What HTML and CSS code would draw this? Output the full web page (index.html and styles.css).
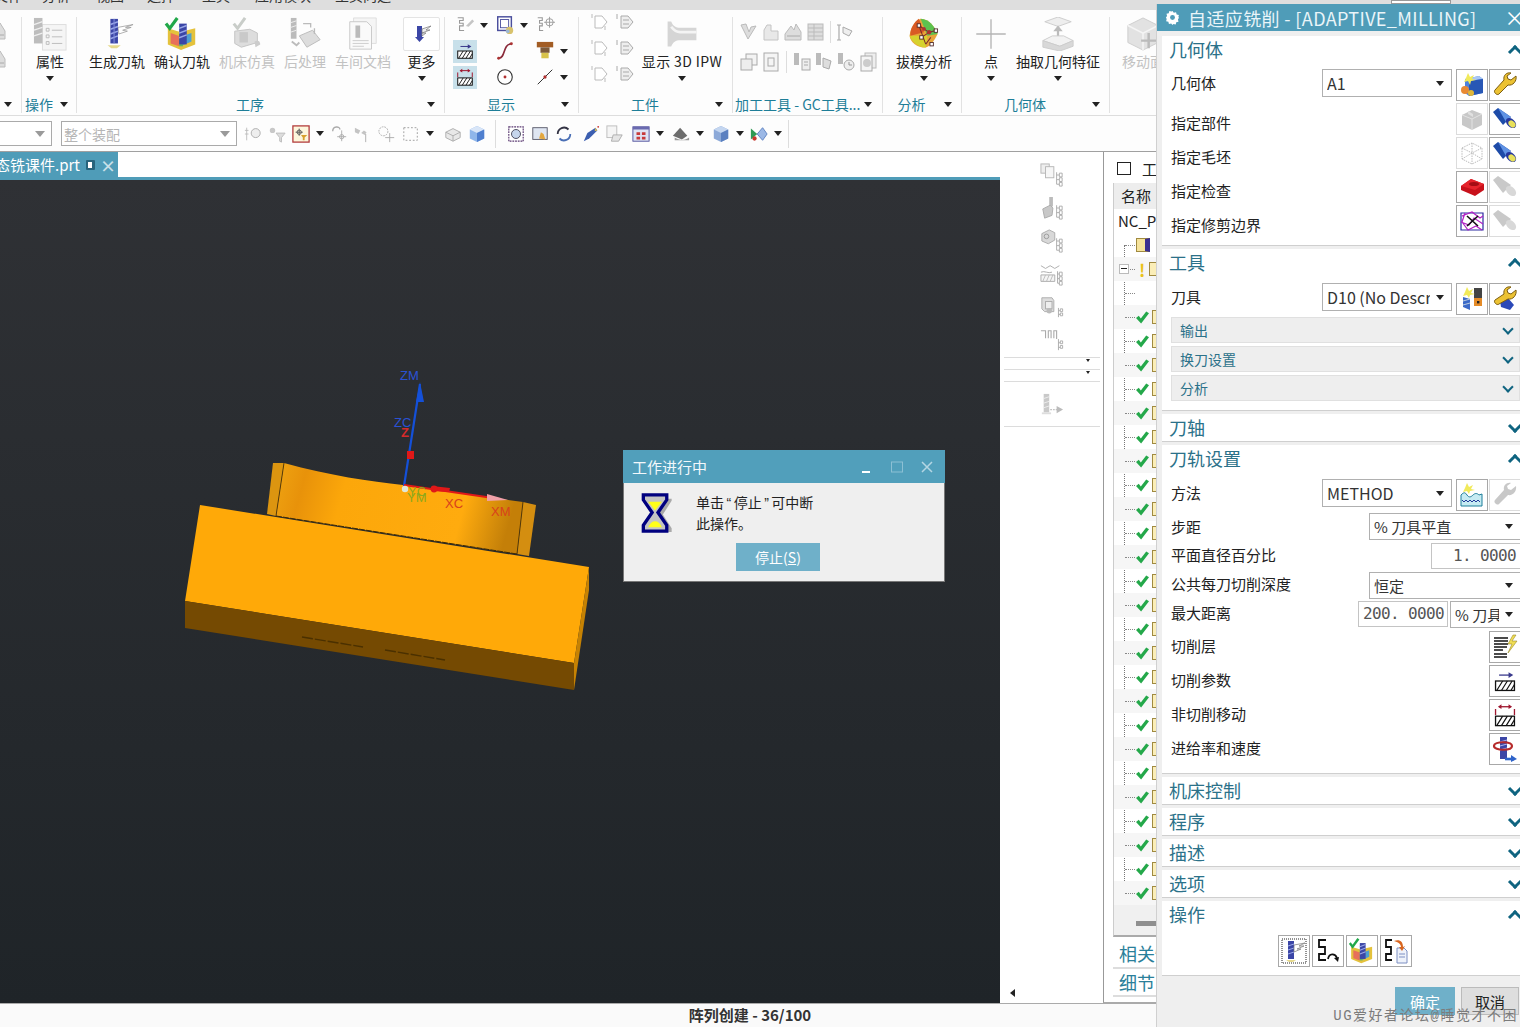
FILE: index.html
```html
<!DOCTYPE html>
<html lang="zh">
<head>
<meta charset="utf-8">
<title>NX CAM</title>
<link rel="stylesheet" href="styles.css">
</head>
<body>
<svg class="defs" aria-hidden="true">
<symbol id="gen" viewBox="0 0 36 36"><path d="M19 11l16-3-8 3 6 0-9 3 5 1-9 3z" fill="#fff" stroke="#999" stroke-width=".8"/><rect x="11" y="2" width="8" height="26" fill="#3b46a6"/><path d="M11 8l8-3M11 13l8-3M11 18l8-3M11 23l8-3" stroke="#9aa8e8" stroke-width="1.6"/><rect x="14" y="2" width="2" height="26" fill="#7f8bd8" opacity=".6"/><path d="M8 30h14l-4 3h-6z" fill="#e6d98c"/></symbol>
<symbol id="ver" viewBox="0 0 36 36"><path d="M3 12l13 4 16-4v17l-15 6L3 29z" fill="#e4c23c"/><path d="M6 17l9 3v11l-9-3z" fill="#e7705a"/><path d="M15 20l4 0v11l-4 0z" fill="#5db26b"/><path d="M19 20l9-3v9l-9 4z" fill="#4f9fd0"/><rect x="15" y="7" width="8" height="22" fill="#3b46a6"/><path d="M15 12l8-3M15 17l8-3M15 22l8-3" stroke="#9aa8e8" stroke-width="1.5"/><path d="M1 7l4 5 8-11" fill="none" stroke="#21a84a" stroke-width="3.4"/></symbol>
<symbol id="sim" viewBox="0 0 36 36"><path d="M5 15l16-2 8 4v10l-17 5-7-4z" fill="#ddd" stroke="#c4c4c4"/><path d="M10 16h9v11h-9z" fill="#c9c9c9"/><path d="M4 7l4 5 8-11" fill="none" stroke="#c9cdc9" stroke-width="3.2"/><path d="M26 26c4-2 6 0 6 3l-5 3z" fill="#ccc"/></symbol>
<symbol id="post" viewBox="0 0 36 36"><rect x="3" y="1" width="6" height="22" fill="#bbb"/><path d="M3 6l6-2M3 11l6-2M3 16l6-2" stroke="#eee"/><path d="M12 20l14-6 8 10-14 8z" fill="#ddd" stroke="#bbb"/><path d="M16 7h8v4M28 12v6" fill="none" stroke="#bbb" stroke-width="1.4"/><path d="M4 26l5 4 3-3" fill="none" stroke="#bbb" stroke-width="2"/></symbol>
<symbol id="doc" viewBox="0 0 36 36"><path d="M8 1h24v27H8z" fill="#f5f5f5" stroke="#ddd"/><path d="M4 5h18l5 5v24H4z" fill="#fafafa" stroke="#c8c8c8"/><rect x="10" y="9" width="5" height="13" fill="#bbb"/><path d="M7 25h17M7 28h17M7 31h12" stroke="#ccc"/></symbol>
<symbol id="attr" viewBox="0 0 36 36"><rect x="10" y="8" width="25" height="27" fill="#f5f5f5" stroke="#ddd"/><path d="M20 14h11M20 21h11M20 28h11" stroke="#bbb"/><path d="M14 12h3v3h-3zM14 19h3v3h-3zM14 26h3v3h-3z" fill="none" stroke="#bbb"/><rect x="1" y="1" width="9" height="27" fill="#bdbdbd"/><path d="M1 8l9-3M1 14l9-3M1 20l9-3" stroke="#eee" stroke-width="1.4"/></symbol>
<symbol id="more" viewBox="0 0 20 20"><rect x="5" y="2" width="5" height="13" fill="#3b46a6"/><path d="M10 5l9-3-5 4 4 0-8 3 4 0-4 3z" fill="#eee" stroke="#777" stroke-width=".7"/><path d="M3 13l4.500 5 4.500-5z" fill="#3b46a6"/></symbol>
<symbol id="s1" viewBox="0 0 22 22"><path d="M3 3h6v3H5v3h4v3H5v5h5" fill="none" stroke="#999" stroke-width="1.2"/><path d="M12 12l7-7 2 2-6 6z" fill="#c5c5c5"/></symbol>
<symbol id="s2" viewBox="0 0 22 22"><rect x="3" y="2" width="15" height="15" fill="#fff" stroke="#4b4f9d" stroke-width="1.6"/><rect x="6" y="5" width="9" height="9" fill="none" stroke="#4b4f9d"/><circle cx="16" cy="17" r="4" fill="#d8c26c"/><circle cx="14" cy="18" r="2" fill="#9bb8d8"/></symbol>
<symbol id="s3" viewBox="0 0 22 22"><path d="M3 3h5v3H5v3h3v3H5v5h4" fill="none" stroke="#999" stroke-width="1.2"/><circle cx="16" cy="8" r="4" fill="none" stroke="#999"/><path d="M16 2v12M10 8h12" stroke="#999"/></symbol>
<symbol id="cutp" viewBox="0 0 22 22"><path d="M6 6h10" stroke="#3a3a8c" stroke-width="1.1"/><path d="M14 3.500l4 2.500-4 2.500z" fill="#3a3a8c"/><rect x="3" y="11" width="16" height="8" fill="#fff" stroke="#111" stroke-width="1.1"/><path d="M4 19l5-8M8 19l5-8M12 19l5-8M16 19l3-5" stroke="#111" stroke-width="1"/></symbol>
<symbol id="noncut" viewBox="0 0 22 22"><path d="M6 4h10" stroke="#a01830" stroke-width="1.1"/><path d="M8 2l-3 2 3 2zM14 2l3 2-3 2z" fill="#a01830"/><path d="M3 6v5M19 6v5" stroke="#a01830" stroke-width="1.1"/><rect x="3" y="12" width="16" height="8" fill="#fff" stroke="#111" stroke-width="1.1"/><path d="M4 20l5-8M8 20l5-8M12 20l5-8M16 20l3-5" stroke="#111" stroke-width="1"/></symbol>
<symbol id="curve" viewBox="0 0 22 22"><path d="M4 19c8 0 4-15 14-16" fill="none" stroke="#8a2a3a" stroke-width="1.8"/><circle cx="4" cy="19" r="1.6" fill="#a33"/><circle cx="18" cy="3" r="1.6" fill="#a33"/></symbol>
<symbol id="tool" viewBox="0 0 22 22"><rect x="2" y="1" width="18" height="6" fill="#a25c24"/><rect x="6" y="7" width="10" height="6" fill="#7d5a3a"/><rect x="7" y="13" width="8" height="6" fill="#d8c24a"/></symbol>
<symbol id="circ" viewBox="0 0 22 22"><circle cx="11" cy="11" r="8" fill="#fff" stroke="#333" stroke-width="1.2"/><circle cx="11" cy="11" r="1.6" fill="#b03030"/></symbol>
<symbol id="line" viewBox="0 0 22 22"><path d="M3 19L19 3" stroke="#333" stroke-width="1.1"/><circle cx="11" cy="11" r="1.8" fill="#b03030"/></symbol>
<symbol id="tri" viewBox="0 0 20 20"><path d="M5 4h7l5 6-5 6H5z" fill="#fff" stroke="#bbb"/><path d="M2 2v4M15 14v4" stroke="#bbb"/></symbol>
<symbol id="trib" viewBox="0 0 20 20"><path d="M6 4h7l5 6-5 6H6z" fill="#eee" stroke="#aaa"/><path d="M2 2v5M8 8h6M8 12h6" stroke="#aaa"/></symbol>
<symbol id="ipw" viewBox="0 0 40 36"><path d="M4 4h4c2 5 5 7 10 7h18v14H18c-5 0-8 2-10 7H4z" fill="#d5d5d5"/><path d="M8 10c3 4 6 6 10 6h18" stroke="#f4f4f4" stroke-width="3" fill="none"/></symbol>
<symbol id="gc1" viewBox="0 0 20 20"><path d="M2 3l7 14 8-13-5 1-2 5-3-8z" fill="#ddd" stroke="#bbb"/></symbol>
<symbol id="gc2" viewBox="0 0 20 20"><path d="M3 8l3-5h4v6h7v9H3z" fill="#e8e8e8" stroke="#c4c4c4"/></symbol>
<symbol id="gc3" viewBox="0 0 20 20"><path d="M2 12l6-8 3 4 2-6 5 8v8H2z" fill="#ddd" stroke="#bbb"/><path d="M4 14h13" stroke="#aaa"/></symbol>
<symbol id="gc4" viewBox="0 0 20 20"><rect x="3" y="2" width="15" height="16" fill="#ddd" stroke="#bbb"/><path d="M3 6h15M3 10h15M3 14h15M9 2v16" stroke="#bbb"/></symbol>
<symbol id="gc5" viewBox="0 0 20 20"><path d="M3 3v15M1 3h4M1 18h4" stroke="#aaa" stroke-width="1.2"/><path d="M7 5l9 4-3 5-6-3z" fill="#eee" stroke="#aaa"/></symbol>
<symbol id="gc6" viewBox="0 0 20 20"><rect x="7" y="2" width="11" height="11" fill="#f3f3f3" stroke="#aaa"/><rect x="2" y="7" width="11" height="11" fill="#eee" stroke="#aaa"/></symbol>
<symbol id="gc7" viewBox="0 0 20 20"><rect x="3" y="1" width="14" height="18" fill="#f5f5f5" stroke="#aaa"/><rect x="7" y="6" width="6" height="8" fill="none" stroke="#aaa"/></symbol>
<symbol id="gc8" viewBox="0 0 20 20"><rect x="2" y="1" width="5" height="12" fill="#bbb"/><rect x="10" y="7" width="8" height="11" fill="#eee" stroke="#aaa"/><path d="M12 10h4M12 13h4" stroke="#aaa"/></symbol>
<symbol id="gc9" viewBox="0 0 20 20"><rect x="2" y="1" width="5" height="12" fill="#bbb"/><path d="M9 6l8 3-2 8-6-2z" fill="#ddd" stroke="#aaa"/></symbol>
<symbol id="gc10" viewBox="0 0 20 20"><rect x="2" y="1" width="5" height="11" fill="#bbb"/><circle cx="13" cy="13" r="5" fill="#eee" stroke="#aaa"/><path d="M13 10v3h3" stroke="#999" fill="none"/></symbol>
<symbol id="gc11" viewBox="0 0 20 20"><rect x="7" y="1" width="11" height="15" fill="#eee" stroke="#bbb"/><rect x="3" y="4" width="11" height="15" fill="#f5f5f5" stroke="#aaa"/><circle cx="9" cy="11" r="4" fill="#ccc"/></symbol>
<symbol id="st1" viewBox="0 0 26 26"><rect x="1" y="1" width="9" height="10" fill="#eee" stroke="#b5b5b5"/><rect x="6" y="4" width="9" height="12" fill="#f6f6f6" stroke="#b5b5b5"/><path d="M18 10v13M18 13h3M18 18h3M18 23h3" fill="none" stroke="#aaa"/><path d="M21 11h3v4h-3zM21 16h3v4h-3zM21 21h3v4h-3z" fill="#fff" stroke="#aaa"/></symbol>
<symbol id="st2" viewBox="0 0 26 26"><path d="M10 1h4v10l-4 2z" fill="#bbb"/><path d="M3 14l8-4 3 3-1 8-8 3z" fill="#c8c8c8" stroke="#aaa"/><path d="M18 10v13M18 13h3M18 18h3M18 23h3" fill="none" stroke="#aaa"/><path d="M21 11h3v4h-3zM21 16h3v4h-3zM21 21h3v4h-3z" fill="#fff" stroke="#aaa"/></symbol>
<symbol id="st3" viewBox="0 0 26 26"><path d="M2 5l8-4 6 3v8l-7 4-7-3z" fill="#d8d8d8" stroke="#aaa"/><circle cx="7" cy="8" r="2.500" fill="none" stroke="#999"/><path d="M18 10v13M18 13h3M18 18h3M18 23h3" fill="none" stroke="#aaa"/><path d="M21 11h3v4h-3zM21 16h3v4h-3zM21 21h3v4h-3z" fill="#fff" stroke="#aaa"/></symbol>
<symbol id="st4" viewBox="0 0 26 26"><path d="M1 4l5 3 5-3 5 3 5-3" fill="none" stroke="#aaa"/><path d="M1 11c4-2 8 2 12 0M1 14h15v7H1z" fill="#f5f5f5" stroke="#aaa"/><path d="M3 21l3-7M7 21l3-7M11 21l3-7" stroke="#bbb"/><path d="M19 10v13M19 13h2M19 18h2M19 23h2" fill="none" stroke="#aaa"/><path d="M21 11h3v4h-3zM21 16h3v4h-3zM21 21h3v4h-3z" fill="#fff" stroke="#aaa"/></symbol>
<symbol id="st5" viewBox="0 0 26 26"><path d="M2 3h11l2 3v12H5L2 15z" fill="#ddd" stroke="#aaa"/><rect x="6" y="7" width="7" height="8" fill="#eee" stroke="#aaa"/><circle cx="10" cy="17" r="3" fill="#bbb"/><path d="M20 14v10M20 17h2M20 21h2" fill="none" stroke="#aaa"/><path d="M22 15h2.500v3H22zM22 19.500h2.500v3H22z" fill="#fff" stroke="#aaa"/></symbol>
<symbol id="st6" viewBox="0 0 26 26"><path d="M1 3h5v8M9 11V3h3v8M15 11V3h3v9" fill="none" stroke="#aaa" stroke-width="1.2"/><path d="M20 12v12M20 16h2M20 21h2" fill="none" stroke="#aaa"/><path d="M22 14h2.500v3H22zM22 19h2.500v3H22z" fill="#fff" stroke="#aaa"/></symbol>
<symbol id="st7" viewBox="0 0 26 26"><rect x="4" y="1" width="6" height="20" fill="#c9c9c9"/><path d="M4 6l6-2M4 11l6-2M4 16l6-2" stroke="#eee"/><path d="M2 21h10v2H2z" fill="#ddd"/><path d="M11 18h8" stroke="#c4c4c4" stroke-width="1.5" stroke-dasharray="2 1"/><path d="M18 14l7 4-7 4z" fill="#bbb"/></symbol>
<symbol id="draft" viewBox="0 0 40 40"><path d="M16 2c10 0 17 10 20 18-4 8-8 14-14 16C12 36 4 30 3 22 4 13 10 4 16 2z" fill="#e8a53a"/><path d="M16 2c10 0 17 10 20 18L24 22z" fill="#5cc24f"/><path d="M3 22c3 8 10 13 19 14l2-14z" fill="#d6d22e"/><path d="M4 22c-1-8 5-17 10-20l6 16z" fill="#d95a24"/><path d="M14 10l8 22M14 10l12 8M26 18l-9 6M26 18l8-2M22 32l6-8" stroke="#7a2c2c" stroke-width="1.2"/><g fill="#fff" stroke="#4a2020"><rect x="12" y="8" width="4" height="4"/><rect x="32" y="14" width="4" height="4"/><rect x="15" y="22" width="4" height="4"/><rect x="27" y="30" width="4" height="4"/></g><circle cx="26" cy="18" r="2.600" fill="#a33"/><circle cx="20" cy="14" r="2.200" fill="#a33"/></symbol>
<symbol id="pt" viewBox="0 0 30 30"><path d="M15 2v26M2 15h26" stroke="#b5b5b5" stroke-width="1.2"/></symbol>
<symbol id="ext" viewBox="0 0 36 36"><path d="M18 0l14 5-14 5-14-5z" fill="#eee" stroke="#ccc"/><path d="M18 26V12" stroke="#bbb" stroke-width="2.400"/><path d="M13 15l5-6 5 6z" fill="#bbb"/><path d="M2 25l10-5h12l10 5-14 6z" fill="#f2f2f2" stroke="#ccc"/><path d="M2 25v7l18 4 14-5v-6l-14 6z" fill="#d8d8d8" stroke="#ccc"/></symbol>
<symbol id="mv" viewBox="0 0 36 36"><path d="M18 1l16 8v18l-16 8-16-8V9z" fill="#e2e2e2" stroke="#ccc"/><path d="M2 9l16 8 16-8M18 17v18" stroke="#f5f5f5" stroke-width="1.6" fill="none"/><path d="M24 17v16M16 25h16" stroke="#bbb" stroke-width="2.600"/></symbol>
<symbol id="cube" viewBox="0 0 20 20"><path d="M10 1l8 4v10l-8 4-8-4V5z" fill="#8fb6ea"/><path d="M2 5l8 4 8-4-8-4z" fill="#d9e6f8"/><path d="M10 9v10l8-4V5z" fill="#4f7fcf"/></symbol>
<symbol id="t1" viewBox="0 0 20 20"><path d="M3 3v14M1 6h4M1 10h4" stroke="#bbb"/><circle cx="13" cy="9" r="5" fill="#eee" stroke="#aaa"/></symbol>
<symbol id="t2" viewBox="0 0 20 20"><circle cx="5" cy="6" r="3" fill="#c8c8c8"/><path d="M9 9h10l-4 5v5l-2-1v-4z" fill="#ddd" stroke="#bbb"/></symbol>
<symbol id="t3" viewBox="0 0 20 20"><rect x="1" y="1" width="18" height="18" fill="#fdf6dc" stroke="#b03838" stroke-width="1.4"/><path d="M8 4v8M4 8h8" stroke="#555"/><circle cx="8" cy="8" r="2.400" fill="none" stroke="#555"/><path d="M10 11h7l-3 3v3h-2v-3z" fill="#d8a02c"/></symbol>
<symbol id="t4" viewBox="0 0 20 20"><path d="M3 7c0-6 8-6 8-2" fill="none" stroke="#aaa" stroke-width="1.5"/><path d="M13 6v12M8 13h10" stroke="#aaa"/><circle cx="13" cy="13" r="2.400" fill="none" stroke="#aaa"/></symbol>
<symbol id="t5" viewBox="0 0 20 20"><path d="M1 3l6 3-2 4-4-2zM8 9l3-3 3 2-2 3z" fill="#c4c4c4"/><path d="M13 10v9" stroke="#aaa"/></symbol>
<symbol id="t6" viewBox="0 0 20 20"><circle cx="6" cy="7" r="5" fill="none" stroke="#aaa" stroke-dasharray="2 1"/><path d="M13 9v10M8 14h10" stroke="#aaa"/></symbol>
<symbol id="t7" viewBox="0 0 20 20"><rect x="2" y="3" width="15" height="14" fill="none" stroke="#999" stroke-dasharray="2 2"/></symbol>
<symbol id="t8" viewBox="0 0 20 20"><path d="M2 8l8-4 8 4v6l-8 4-8-4z" fill="#e8e8e8" stroke="#aaa"/><path d="M2 8l8 4 8-4M10 12v6" stroke="#aaa" fill="none"/></symbol>
<symbol id="t9" viewBox="0 0 20 20"><rect x="2" y="2" width="16" height="16" fill="#fff" stroke="#5b3a72" stroke-dasharray="2 1" stroke-width="1.3"/><circle cx="10" cy="10" r="5" fill="#c6d6ec" stroke="#445"/></symbol>
<symbol id="t10" viewBox="0 0 20 20"><rect x="2" y="3" width="16" height="13" fill="#dfe6f2" stroke="#556"/><path d="M9 15l2-7 3 2 2 6z" fill="#e3a73f"/></symbol>
<symbol id="t11" viewBox="0 0 20 20"><path d="M3 10a7 7 0 0 1 12-5" fill="none" stroke="#334" stroke-width="2"/><path d="M17 10a7 7 0 0 1-12 5" fill="none" stroke="#4a6fb5" stroke-width="2"/></symbol>
<symbol id="t12" viewBox="0 0 20 20"><path d="M2 18l4-9 9-6 2 3-9 9z" fill="#3c5fb0"/><path d="M15 3l2 3-3 1z" fill="#e0c050"/><circle cx="18" cy="2" r="1" fill="#c33"/></symbol>
<symbol id="t13" viewBox="0 0 20 20"><rect x="1" y="1" width="11" height="13" fill="#f5f5f5" stroke="#bbb"/><path d="M8 11l10 0-4 7H6z" fill="#e5e5e5" stroke="#aaa"/></symbol>
<symbol id="t14" viewBox="0 0 20 20"><rect x="1" y="2" width="18" height="16" fill="#dfe4f4" stroke="#4d4d9a"/><rect x="1" y="2" width="18" height="3" fill="#6a6ab0"/><path d="M5 8h4v3H5zM11 8h4v3h-4zM5 13h4v3H5zM11 13h4v3h-4z" fill="#c83a3a"/></symbol>
<symbol id="t15" viewBox="0 0 20 20"><path d="M1 12l8-9 8 9-6 4z" fill="#6c6c6c"/><path d="M3 14c6 4 12 3 16 0v3H3z" fill="#999"/></symbol>
<symbol id="t16" viewBox="0 0 20 20"><path d="M10 1l8 4v10l-8 4-8-4V5z" fill="#8ca9d8"/><path d="M2 5l8 4 8-4-8-4z" fill="#c4d6f0"/><path d="M10 9v10l8-4V5z" fill="#5b80c0"/></symbol>
<symbol id="t17" viewBox="0 0 20 20"><path d="M1 4l7 6-7 6z" fill="#2f9a55"/><path d="M8 10l6-7 5 7-5 7z" fill="#9bb8e6" stroke="#5b80c0"/><circle cx="5" cy="15" r="2.400" fill="#c9392f"/></symbol>
<symbol id="chk" viewBox="0 0 14 14"><path d="M0 7.500l3-2.500 2.200 3L11 0.500 14 2.500 5.500 13.500z" fill="#24a84a"/></symbol>
<symbol id="geo" viewBox="0 0 26 26"><path d="M6 7l14-3 4 3v14l-14 3-4-3z" fill="#4d82dd"/><path d="M6 7l14-3 4 3-14 2z" fill="#a8c6f4"/><path d="M10 9l14-2v14l-14 3z" fill="#2857b5"/><circle cx="6" cy="18" r="4" fill="#e88a34"/><circle cx="12" cy="21" r="3" fill="#e0b73a"/><path d="M9 1l2 4 4-2-2 4 4 1-5 1-1 4-2-4-4 1 2-4z" fill="#f1ea5a"/></symbol>
<symbol id="wr" viewBox="0 0 26 26"><path d="M24 4l-5 4-3-1-1-3 4-3c-4-1-8 2-7 7L3 18c-2 2 2 6 4 4l9-9c5 1 9-4 8-9z" fill="#ecc233" stroke="#7b5d12"/></symbol>
<symbol id="wrg" viewBox="0 0 26 26"><path d="M24 4l-5 4-3-1-1-3 4-3c-4-1-8 2-7 7L3 18c-2 2 2 6 4 4l9-9c5 1 9-4 8-9z" fill="#c8c8c8"/></symbol>
<symbol id="part" viewBox="0 0 26 26"><path d="M3 9l10-5 10 4v11l-10 5-10-5z" fill="#c8c8c8"/><path d="M3 9l10 4 10-5M13 13v11" stroke="#e2e2e2" fill="none"/><path d="M9 5l5 3v3l-5-3z" fill="#e0e0e0"/></symbol>
<symbol id="fl" viewBox="0 0 26 26"><path d="M1 6l5-4 13 9-8 8z" fill="#1d4ba8"/><path d="M6 2l13 9-5 5z" fill="#5f92e4"/><ellipse cx="19" cy="17" rx="4" ry="6" transform="rotate(-45 19 17)" fill="#25379e"/><ellipse cx="20" cy="18" rx="3" ry="4" transform="rotate(-45 20 18)" fill="#e8e05a"/></symbol>
<symbol id="flg" viewBox="0 0 26 26"><path d="M1 6l5-4 13 9-8 8z" fill="#c9c9c9"/><ellipse cx="19" cy="17" rx="4" ry="6" transform="rotate(-45 19 17)" fill="#d8d8d8"/></symbol>
<symbol id="wire" viewBox="0 0 26 26"><g fill="none" stroke="#bcbcbc" stroke-dasharray="1.500 1"><path d="M3 8l10-5 10 5v11l-10 5-10-5z"/><path d="M3 8l10 5 10-5M13 13v11M3 19l10-6 10 6M13 3v10"/></g></symbol>
<symbol id="red" viewBox="0 0 26 26"><path d="M2 12l10-7 13 5v6l-9 6L2 16z" fill="#c8111b"/><path d="M2 12l10-7 13 5-9 6z" fill="#e6242c"/><ellipse cx="15" cy="10" rx="5" ry="2" fill="#a50d14"/></symbol>
<symbol id="trim" viewBox="0 0 26 26"><path d="M2 5h22v17H2z" fill="#fff" stroke="#2a2aa0" stroke-width="1.2"/><path d="M3 8l10-4 8 6 3-2M2 14l8 3 5-7 9 6M6 5l-3 9 6 8 8-4 6 4" fill="none" stroke="#b21fc4" stroke-width="1.2"/><path d="M8 8l11 10M19 8L8 18" stroke="#111" stroke-width="1.6"/></symbol>
<symbol id="toolnew" viewBox="0 0 26 26"><path d="M4 11l7 2v11l-7-3z" fill="#3c6ac8"/><path d="M4 15l7-2M4 19l7-2" stroke="#bcd"/><rect x="15" y="2" width="8" height="10" fill="#444"/><rect x="15" y="12" width="8" height="8" fill="#e58b27"/><rect x="18" y="15" width="2.400" height="2.400" fill="#222"/><path d="M8 1l2 4 4-2-2 4 4 1-5 1-1 3-2-3-4 1 2-4z" fill="#f1ea5a"/></symbol>
<symbol id="toolwr" viewBox="0 0 26 26"><path d="M8 15l8-3 6 7-4 5-9-3z" fill="#2b49b8"/><path d="M24 4l-5 4-3-1-1-3 4-3c-4-1-8 2-7 7L3 14c-2 2 2 6 4 4l9-5c5 1 9-4 8-9z" fill="#ecc233" stroke="#7b5d12"/></symbol>
<symbol id="meth" viewBox="0 0 26 26"><path d="M8 1l2 4 4-2-2 4 4 1-5 1-1 3-2-3-4 1 2-4z" fill="#f1ea5a"/><path d="M2 13c3-3 4-3 6 0s4 2 6 0 4-2 6 0l3-1v12H2z" fill="#c6ebf2" stroke="#1f7f9b"/><path d="M3 18l2 2 2-2 2 2 2-2 2 2 2-2 2 2 2-2 2 2" fill="none" stroke="#223a9a"/></symbol>
<symbol id="layer" viewBox="0 0 26 26"><path d="M2 4h14M2 7h14M2 10h14M2 13h13M2 16h9M2 20h13M2 23h13" stroke="#111" stroke-width="1.7"/><path d="M21 1l-5 9h4l-4 9 9-12h-5l4-6z" fill="#f0dd55" stroke="#9b8b2a" stroke-width=".6"/></symbol>
<symbol id="feed" viewBox="0 0 26 26"><rect x="8" y="1" width="7" height="22" fill="#3c46a6"/><path d="M8 6l7-2M8 10l7-2M8 14l7-2" stroke="#aab6ee"/><path d="M2 10c0-5 18-5 18 0s-18 5-18 0z" fill="none" stroke="#b62a2a" stroke-width="2.200"/><path d="M13 23h9" stroke="#2e63c9" stroke-width="2.600"/><path d="M19 19l6 4-6 3z" fill="#2e63c9"/></symbol>
<symbol id="path1" viewBox="0 0 26 26"><rect x="1" y="1" width="24" height="24" fill="none" stroke="#222" stroke-dasharray="1 1"/><rect x="7" y="3" width="6" height="18" fill="#3b46a6"/><path d="M7 8l6-2M7 12l6-2M7 16l6-2" stroke="#9aa8e8"/><path d="M13 7l11-2-6 3 5 0-7 3 4 0-7 3z" fill="#fff" stroke="#777" stroke-width=".7"/><path d="M5 22h10l-3 2H8z" fill="#e6d98c"/></symbol>
<symbol id="path2" viewBox="0 0 26 26"><path d="M11 2H4v7h6v7H4v6h7" fill="none" stroke="#111" stroke-width="1.8"/><path d="M13 21c1-6 7-6 9-1" fill="none" stroke="#111" stroke-width="1.8"/><path d="M19 20l5-1-1 5z" fill="#111"/></symbol>
<symbol id="path4" viewBox="0 0 26 26"><path d="M9 2H3v7h5v7H3v6h6" fill="none" stroke="#111" stroke-width="1.8"/><path d="M14 10h7l3 3v12H14z" fill="#eef2fa" stroke="#7d8fc2"/><path d="M16 16h6M16 19h6" stroke="#7d8fc2"/><path d="M11 3c6-2 9 1 9 6l2-1-3 5-3-4 2 0c0-3-3-5-7-6z" fill="#d8651e"/></symbol>
</svg>

<div class="app">
  <div class="menubar">
    <div class="menu-inner">
      <span class="m1">文件</span><span class="m2">分析</span><span class="m3">视图</span><span class="m4">选择</span><span class="m5">工具</span><span class="m6">应用模块</span><span class="m7">主页向选</span>
    </div>
    <div class="menu-search"></div>
  </div>

  <div class="ribbon">
    <div class="grp g0">
      <div class="grp-body"><div class="stack"><svg class="b20"><use href="#gc3"/></svg><svg class="b20"><use href="#gc3"/></svg></div></div>
      <div class="grp-foot"><span></span><span></span><i class="c"></i></div>
    </div>
    <div class="grp g1">
      <div class="grp-body"><div class="item off"><svg class="big"><use href="#attr"/></svg><b>属性</b><i class="c"></i></div></div>
      <div class="grp-foot left"><span>操作</span><i class="c"></i></div>
    </div>
    <div class="grp g2">
      <div class="grp-body">
        <div class="item"><svg class="big"><use href="#gen"/></svg><b>生成刀轨</b></div>
        <div class="item"><svg class="big"><use href="#ver"/></svg><b>确认刀轨</b></div>
        <div class="item dim"><svg class="big"><use href="#sim"/></svg><b>机床仿真</b></div>
        <div class="item dim"><svg class="big"><use href="#post"/></svg><b>后处理</b></div>
        <div class="item dim"><svg class="big"><use href="#doc"/></svg><b>车间文档</b></div>
        <div class="item morebox"><span class="morebtn"><svg class="b20"><use href="#more"/></svg></span><b>更多</b><i class="c"></i></div>
      </div>
      <div class="grp-foot"><span></span><span>工序</span><i class="c"></i></div>
    </div>
    <div class="grp g3">
      <div class="grp-body">
        <div class="grid3">
          <div class="cell"><svg class="s"><use href="#s1"/></svg><i class="c"></i></div>
          <div class="cell"><svg class="s"><use href="#s2"/></svg><i class="c"></i></div>
          <div class="cell"><svg class="s"><use href="#s3"/></svg></div>
          <div class="cell"><span class="hl"><svg class="s"><use href="#cutp"/></svg></span></div>
          <div class="cell"><svg class="s"><use href="#curve"/></svg></div>
          <div class="cell"><svg class="s"><use href="#tool"/></svg><i class="c"></i></div>
          <div class="cell"><span class="hl"><svg class="s"><use href="#noncut"/></svg></span></div>
          <div class="cell"><svg class="s"><use href="#circ"/></svg></div>
          <div class="cell"><svg class="s"><use href="#line"/></svg><i class="c"></i></div>
        </div>
      </div>
      <div class="grp-foot"><span></span><span>显示</span><i class="c"></i></div>
    </div>
    <div class="grp g4">
      <div class="grp-body">
        <div class="grid2">
          <svg class="s"><use href="#tri"/></svg><svg class="s"><use href="#trib"/></svg>
          <svg class="s"><use href="#tri"/></svg><svg class="s"><use href="#trib"/></svg>
          <svg class="s"><use href="#tri"/></svg><svg class="s"><use href="#trib"/></svg>
        </div>
        <div class="item ipw"><svg class="big"><use href="#ipw"/></svg><b>显示 3D IPW</b><i class="c"></i></div>
      </div>
      <div class="grp-foot"><span></span><span>工件</span><i class="c"></i></div>
    </div>
    <div class="grp g5">
      <div class="grp-body gcs">
        <div class="gcrow">
          <svg class="s"><use href="#gc1"/></svg><svg class="s"><use href="#gc2"/></svg><svg class="s"><use href="#gc3"/></svg><svg class="s"><use href="#gc4"/></svg><u class="vs"></u><svg class="s"><use href="#gc5"/></svg>
        </div>
        <div class="gcrow">
          <svg class="s"><use href="#gc6"/></svg><svg class="s"><use href="#gc7"/></svg><u class="vs"></u><svg class="s"><use href="#gc8"/></svg><svg class="s"><use href="#gc9"/></svg><svg class="s"><use href="#gc10"/></svg><svg class="s"><use href="#gc11"/></svg>
        </div>
      </div>
      <div class="grp-foot left tight"><span>加工工具 - GC工具...</span><i class="c"></i></div>
    </div>
    <div class="grp g6">
      <div class="grp-body"><div class="item"><svg class="big"><use href="#draft"/></svg><b>拔模分析</b><i class="c"></i></div></div>
      <div class="grp-foot"><span></span><span>分析</span><i class="c"></i></div>
    </div>
    <div class="grp g7">
      <div class="grp-body">
        <div class="item"><svg class="big"><use href="#pt"/></svg><b>点</b><i class="c"></i></div>
        <div class="item"><svg class="big"><use href="#ext"/></svg><b>抽取几何特征</b><i class="c"></i></div>
      </div>
      <div class="grp-foot"><span></span><span>几何体</span><i class="c"></i></div>
    </div>
    <div class="grp g8">
      <div class="grp-body"><div class="item dim"><svg class="big"><use href="#mv"/></svg><b>移动面</b></div></div>
    </div>
  </div>

  <div class="toolbar">
    <div class="tsel t-a"><i class="cg"></i></div>
    <div class="tsel t-b"><span>整个装配</span><i class="cg"></i></div>
    <svg class="ti"><use href="#t1"/></svg><svg class="ti"><use href="#t2"/></svg><svg class="ti"><use href="#t3"/></svg><i class="c"></i>
    <svg class="ti"><use href="#t4"/></svg><svg class="ti"><use href="#t5"/></svg><svg class="ti"><use href="#t6"/></svg><svg class="ti"><use href="#t7"/></svg><i class="c"></i>
    <svg class="ti ml4"><use href="#t8"/></svg><svg class="ti"><use href="#cube"/></svg>
    <u class="vsep ml3"></u>
    <svg class="ti ml5"><use href="#t9"/></svg><svg class="ti"><use href="#t10"/></svg><svg class="ti"><use href="#t11"/></svg>
    <svg class="ti ml3"><use href="#t12"/></svg><svg class="ti"><use href="#t13"/></svg>
    <svg class="ti ml2"><use href="#t14"/></svg><i class="c"></i>
    <svg class="ti ml2"><use href="#t15"/></svg><i class="c"></i>
    <svg class="ti ml2"><use href="#t16"/></svg><i class="c"></i>
    <svg class="ti"><use href="#t17"/></svg><i class="c"></i>
    <u class="vsep"></u>
  </div>

  <div class="work">
    <div class="view-col">
      <div class="tabs">
        <div class="tab"><span class="tab-name">动态铣课件.prt</span><span class="tab-ic"></span><span class="tab-x">×</span></div>
      </div>
      <div class="viewport">
        <svg class="scene" viewBox="0 180 1000 822">
          <defs>
            <linearGradient id="cyl" x1="0" x2="1" y1="0" y2=".1">
              <stop offset="0" stop-color="#efa412"/><stop offset=".13" stop-color="#e8920a"/><stop offset=".3" stop-color="#fca70a"/><stop offset=".8" stop-color="#ffab0e"/><stop offset=".97" stop-color="#cc860a"/><stop offset="1" stop-color="#c47f08"/>
            </linearGradient>
          </defs>
          <path d="M273 463l11 0-8 53-9-2z" fill="#dc9510"/>
          <path d="M284 463C330 476 370 481 403 485L523 502l-6 52-241-38z" fill="url(#cyl)"/>
          <path d="M523 502l13 3-7 51-12-2z" fill="#d48e10"/>
          <path d="M284 463l-8 53M523 502l-6 52" stroke="#3c2a08" stroke-width=".8"/>
          <path d="M200 505L589 567 574 663 185 601z" fill="#ffa908"/>
          <path d="M185 601L574 663 574 690 185 628z" fill="#754a02"/>
          <path d="M589 567L574 663 574 690 589 590z" fill="#c68203"/>
          <path d="M276 516L517 554" stroke="#3c2a08" stroke-width="1" stroke-dasharray="6 1"/>
          <path d="M302 637l61 10M385 650l60 10" stroke="#4a3000" stroke-width="1.4" stroke-dasharray="11 2"/>
          <path d="M404 486L420 384" stroke="#1450d8" stroke-width="2.200"/>
          <path d="M420 382l-4 20 8 0z" fill="#1450d8"/>
          <path d="M404 485L500 499" stroke="#e01818" stroke-width="2"/>
          <path d="M432 486l18 2-1 4-17-1z" fill="#e01818"/>
          <circle cx="434" cy="489" r="3.400" fill="#e01818"/>
          <path d="M487 494l21 6-21 1z" fill="#f0a0a8"/>
          <rect x="407" y="451" width="7" height="8" fill="#e01818"/>
          <circle cx="405" cy="489" r="3.200" fill="#dfe8d8"/>
          <text class="lb bl" x="400" y="380">ZM</text>
          <text class="lb bl" x="394" y="427">ZC</text>
          <text class="lb rd" x="401" y="437">Z</text>
          <text class="lb gr" x="408" y="496">YC</text>
          <text class="lb gr" x="407" y="502">YM</text>
          <text class="lb rd2" x="445" y="508">XC</text>
          <text class="lb rd2" x="491" y="516">XM</text>
        </svg>
      </div>
    </div>

    <div class="strip">
      <svg class="st"><use href="#st1"/></svg><svg class="st"><use href="#st2"/></svg><svg class="st"><use href="#st3"/></svg><svg class="st"><use href="#st4"/></svg><svg class="st"><use href="#st5"/></svg><svg class="st"><use href="#st6"/></svg>
      <div class="st-line first"><i class="ct"></i></div>
      <div class="st-line"><i class="ct"></i></div>
      <div class="st-line"></div>
      <svg class="st last"><use href="#st7"/></svg>
      <div class="st-line"></div>
      <i class="leftarrow"></i>
    </div>

    <div class="nav">
      <div class="nav-head"><i class="box"></i><span>工序导航器</span></div>
      <div class="tree">
        <div class="tree-h">名称</div>
        <div class="tree-root">NC_PROGRAM</div>
        <div class="tree-rows">
          <div class="r"><i class="fold vio"></i></div>
          <div class="r"><i class="exp"></i><span class="warn">!</span><i class="fold"></i></div>
          <div class="r"></div>
          <div class="r"><svg class="k"><use href="#chk"/></svg><i class="fold"></i></div>
          <div class="r"><svg class="k"><use href="#chk"/></svg><i class="fold"></i></div>
          <div class="r"><svg class="k"><use href="#chk"/></svg><i class="fold"></i></div>
          <div class="r"><svg class="k"><use href="#chk"/></svg><i class="fold"></i></div>
          <div class="r"><svg class="k"><use href="#chk"/></svg><i class="fold"></i></div>
          <div class="r"><svg class="k"><use href="#chk"/></svg><i class="fold"></i></div>
          <div class="r"><svg class="k"><use href="#chk"/></svg><i class="fold"></i></div>
          <div class="r"><svg class="k"><use href="#chk"/></svg><i class="fold"></i></div>
          <div class="r"><svg class="k"><use href="#chk"/></svg><i class="fold"></i></div>
          <div class="r"><svg class="k"><use href="#chk"/></svg><i class="fold"></i></div>
          <div class="r"><svg class="k"><use href="#chk"/></svg><i class="fold"></i></div>
          <div class="r"><svg class="k"><use href="#chk"/></svg><i class="fold"></i></div>
          <div class="r"><svg class="k"><use href="#chk"/></svg><i class="fold"></i></div>
          <div class="r"><svg class="k"><use href="#chk"/></svg><i class="fold"></i></div>
          <div class="r"><svg class="k"><use href="#chk"/></svg><i class="fold"></i></div>
          <div class="r"><svg class="k"><use href="#chk"/></svg><i class="fold"></i></div>
          <div class="r"><svg class="k"><use href="#chk"/></svg><i class="fold"></i></div>
          <div class="r"><svg class="k"><use href="#chk"/></svg><i class="fold"></i></div>
          <div class="r"><svg class="k"><use href="#chk"/></svg><i class="fold"></i></div>
          <div class="r"><svg class="k"><use href="#chk"/></svg><i class="fold"></i></div>
          <div class="r"><svg class="k"><use href="#chk"/></svg><i class="fold"></i></div>
          <div class="r"><svg class="k"><use href="#chk"/></svg><i class="fold"></i></div>
          <div class="r"><svg class="k"><use href="#chk"/></svg><i class="fold"></i></div>
          <div class="r"><svg class="k"><use href="#chk"/></svg><i class="fold"></i></div>
          <div class="r"><svg class="k"><use href="#chk"/></svg><i class="fold"></i></div>
        </div>
        <div class="tree-sb"><i></i></div>
      </div>
      <div class="nav-tab">相关性</div>
      <div class="nav-tab">细节</div>
    </div>
  </div>

  <div class="status">阵列创建 - 36/100</div>
</div>

<div class="modal">
  <div class="modal-t"><span>工作进行中</span>
    <svg class="mc" viewBox="0 0 14 14"><path d="M2 12h8" stroke="#fff" stroke-width="2"/></svg>
    <svg class="mc" viewBox="0 0 14 14"><rect x="1.500" y="2" width="11" height="10" fill="none" stroke="#8cc0d4"/></svg>
    <svg class="mc" viewBox="0 0 14 14"><path d="M2 2l10 10M12 2L2 12" stroke="#b4d6e3" stroke-width="1.5"/></svg>
  </div>
  <div class="modal-b">
    <svg class="hg" viewBox="0 0 32 42">
      <path d="M4 4h24v2l-9 14 9 14v4H4v-4l9-14L4 6z" fill="#a9a9a9" transform="translate(3 2)"/>
      <path d="M2 2h24v5l-9 13 9 13v6H2v-6l9-13L2 7z" fill="#c4c4c4" stroke="#00007f" stroke-width="3.400"/>
      <path d="M7 9h14l-7 9z" fill="#ffff1a"/>
      <path d="M7 35c2-4 4-6 7-6s5 2 7 6z" fill="#ffff1a"/>
    </svg>
    <p class="modal-txt">单击<span class="q">“</span>停止<span class="q">”</span>可中断<br>此操作。</p>
  </div>
  <div class="modal-f"><button class="stop">停止(<u>S</u>)</button></div>
</div>

<div class="dlg">
  <div class="dlg-t"><svg class="gear" viewBox="0 0 16 16"><path d="M8 1l1.400 2 2.400-.6.600 2.400 2.400.6-.6 2.400L15 8l-1.200 2 .6 2.400-2.400.6-.6 2.400-2.400-.6L8 16l-1.400-1.600-2.400.6-.6-2.400-2.400-.6.6-2.400L1 8l1.200-1.600-.6-2.400 2.400-.6.6-2.400 2.400.6z" fill="#fff"/><circle cx="8" cy="8" r="2.600" fill="#4f9cb8"/></svg><span>自适应铣削 - [ADAPTIVE_MILLING]</span><b class="dlg-x">×</b></div>
  <div class="dlg-b">
    <section class="sec s-a">
      <h2>几何体<i class="chev up"></i></h2>
      <div class="row h34 top"><label>几何体</label><div class="sel w130 lat"><span>A1</span><i class="c"></i></div><span class="ib"><svg><use href="#geo"/></svg></span><span class="ib"><svg><use href="#wr"/></svg></span></div>
      <div class="row h34 low"><label>指定部件</label><span class="ib lt"><svg><use href="#part"/></svg></span><span class="ib"><svg><use href="#fl"/></svg></span></div>
      <div class="row h34 low"><label>指定毛坯</label><span class="ib lt"><svg><use href="#wire"/></svg></span><span class="ib"><svg><use href="#fl"/></svg></span></div>
      <div class="row h34 low"><label>指定检查</label><span class="ib"><svg><use href="#red"/></svg></span><span class="ib lt"><svg><use href="#flg"/></svg></span></div>
      <div class="row h34 low"><label>指定修剪边界</label><span class="ib"><svg><use href="#trim"/></svg></span><span class="ib lt"><svg><use href="#flg"/></svg></span></div>
    </section>
    <section class="sec s-b">
      <h2>工具<i class="chev up"></i></h2>
      <div class="row h34 top"><label>刀具</label><div class="sel w130 lat"><span>D10 (No Descr</span><i class="c"></i></div><span class="ib"><svg><use href="#toolnew"/></svg></span><span class="ib"><svg><use href="#toolwr"/></svg></span></div>
      <div class="sub">输出<i class="chev sm"></i></div>
      <div class="sub">换刀设置<i class="chev sm"></i></div>
      <div class="sub">分析<i class="chev sm"></i></div>
    </section>
    <section class="sec closed"><h2>刀轴<i class="chev"></i></h2></section>
    <section class="sec s-c">
      <h2>刀轨设置<i class="chev up"></i></h2>
      <div class="row h34 top"><label>方法</label><div class="sel w130 lat"><span>METHOD</span><i class="c"></i></div><span class="ib"><svg><use href="#meth"/></svg></span><span class="ib lt"><svg><use href="#wrg"/></svg></span></div>
      <div class="row h30"><label>步距</label><div class="sel w152"><span>% 刀具平直</span><i class="c"></i></div></div>
      <div class="row h29"><label>平面直径百分比</label><div class="num w90">1. 0000</div></div>
      <div class="row h29"><label>公共每刀切削深度</label><div class="sel w152"><span>恒定</span><i class="c"></i></div></div>
      <div class="row h30 up2"><label>最大距离</label><div class="num w90 nomar">200. 0000</div><div class="sel w71"><span>% 刀具</span><i class="c"></i></div></div>
      <div class="row h34"><label>切削层</label><span class="ib"><svg><use href="#layer"/></svg></span></div>
      <div class="row h34"><label>切削参数</label><span class="ib"><svg><use href="#cutp"/></svg></span></div>
      <div class="row h34"><label>非切削移动</label><span class="ib"><svg><use href="#noncut"/></svg></span></div>
      <div class="row h34"><label>进给率和速度</label><span class="ib"><svg><use href="#feed"/></svg></span></div>
    </section>
    <section class="sec closed"><h2>机床控制<i class="chev"></i></h2></section>
    <section class="sec closed"><h2>程序<i class="chev"></i></h2></section>
    <section class="sec closed"><h2>描述<i class="chev"></i></h2></section>
    <section class="sec closed"><h2>选项<i class="chev"></i></h2></section>
    <section class="sec s-d">
      <h2>操作<i class="chev up"></i></h2>
      <div class="ops">
        <span class="ib"><svg><use href="#path1"/></svg></span><span class="ib"><svg><use href="#path2"/></svg></span><span class="ib"><svg><use href="#ver"/></svg></span><span class="ib"><svg><use href="#path4"/></svg></span>
      </div>
    </section>
  </div>
  <div class="dlg-f"><button class="ok">确定</button><button class="cancel">取消</button></div>
  <div class="wm">UG爱好者论坛@睡觉才不困</div>
</div>
</body>
</html>
```

FILE: styles.css
```css
* { box-sizing: border-box; }
html, body { margin: 0; padding: 0; }
body {
  width: 1520px; height: 1027px; overflow: hidden; position: relative;
  background: #fff; color: #222;
  font-family: "Noto Sans CJK SC", "Noto Sans", sans-serif; font-size: 14px;
}
.defs { width: 0; height: 0; position: absolute; }
i, b, u { font-style: normal; font-weight: 400; text-decoration: none; }

.app { width: 1520px; height: 1027px; display: flex; flex-direction: column; }

/* menu */
.menubar { height: 10px; background: #dedede; overflow: hidden; display: flex; flex: none; }
.menu-inner { display: flex; margin-top: -15px; height: 20px; line-height: 20px; color: #333; }
.m1 { width: 48px; margin-left: -6px; } .m2 { width: 54px; } .m3 { width: 51px; } .m4 { width: 55px; } .m5 { width: 53px; } .m6 { width: 80px; } .m7 { width: 60px; }
.menu-search { width: 60px; height: 4px; background: #fff; border: 1px solid #999; margin-left: 996px; }

/* ribbon */
.ribbon { height: 106px; flex: none; display: flex; background: #fdfdfd; border-bottom: 1px solid #ddd; padding-top: 7px; overflow: hidden; }
.grp { display: flex; flex-direction: column; height: 96px; border-right: 1px solid #e2e2e2; flex: none; }
.g0 { width: 22px; } .g1 { width: 55px; } .g2 { width: 368px; } .g3 { width: 134px; } .g4 { width: 154px; } .g5 { width: 150px; } .g6 { width: 79px; } .g7 { width: 148px; } .g8 { width: 46px; border: 0; }
.grp-body { height: 79px; display: flex; align-items: flex-start; flex: none; }
.grp-foot { height: 17px; line-height: 17px; display: grid; grid-template-columns: 1fr auto 1fr; align-items: center; color: #1e7e98; padding-right: 21px; white-space: nowrap; }
.grp-foot .c { justify-self: end; margin-right: -12px; }
.grp-foot.left { display: flex; gap: 7px; padding: 0 0 0 3px; }
.grp-foot.left .c { margin-right: 0; }
.grp-foot.tight { padding-left: 2px; gap: 4px; }
.g0 .grp-body { justify-content: flex-end; overflow: hidden; }
.stack { display: flex; flex-direction: column; gap: 8px; margin: 4px 14px 0 0; }
.b20 { width: 20px; height: 20px; display: block; }

.c { display: inline-block; width: 0; height: 0; border: 4px solid transparent; border-top: 5px solid #222; border-bottom: 0; flex: none; }
.item { display: flex; flex-direction: column; align-items: center; flex: none; }
.item .big { width: 36px; height: 34px; display: block; }
.item b { line-height: 20px; height: 20px; white-space: nowrap; color: #222; margin-bottom: 5px; }
.item.dim b { color: #c2c2c2; }
.g1 .grp-body { justify-content: center; padding-left: 2px; }
.g2 .grp-body { gap: 9px; padding-left: 12px; }
.morebox { margin-left: 3px; }
.morebtn { width: 37px; height: 34px; border: 1px solid #e4e4e4; border-radius: 2px; display: flex; align-items: center; justify-content: center; background: #fff; }
.grid3 { display: grid; grid-template-columns: repeat(3, 40px); grid-auto-rows: 26px; margin: -5px 0 0 8px; }
.cell { display: flex; align-items: center; gap: 3px; }
.hl { width: 24px; height: 23px; background: #c8e0ea; display: flex; align-items: center; justify-content: center; }
.s { width: 20px; height: 20px; display: block; margin: 0 2px; flex: none; }
.grid2 { display: grid; grid-template-columns: 24px 24px; grid-auto-rows: 26px; gap: 0 1px; margin: -5px 0 0 9px; }
.ipw { margin-left: 2px; width: 86px; }
.ipw b { letter-spacing: .4px; }
.gcs { flex-direction: column; gap: 6px; padding: 3px 0 0 5px; }
.gcrow { display: flex; align-items: center; gap: 0; height: 24px; }
.gcrow .s { margin: 0 1px; }
.vs { width: 1px; height: 22px; background: #ddd; margin: 0 4px; }
.g6 .grp-body { justify-content: center; padding-left: 4px; }
.g7 .grp-body { gap: 7px; padding-left: 11px; }
.g8 .grp-body { padding-left: 12px; }

/* toolbar */
.toolbar { height: 36px; flex: none; display: flex; align-items: center; gap: 6px; background: #fdfdfd; border-bottom: 1px solid #a0a0a0; }
.tsel { height: 25px; background: #fff; border: 1px solid #aaa; display: flex; align-items: center; padding: 0 6px 0 2px; color: #b5b5b5; font-size: 14px; }
.t-a { width: 53px; margin-left: -1px; margin-right: 3px; }
.t-b { width: 176px; margin-right: 1px; }
.cg { width: 0; height: 0; border: 5px solid transparent; border-top: 6px solid #9a9a9a; border-bottom: 0; margin-left: auto; }
.ti { width: 18px; height: 18px; flex: none; display: block; }
.vsep { width: 1px; height: 28px; background: #ddd; flex: none; }
.ml2 { margin-left: 2px; } .ml3 { margin-left: 3px; } .ml4 { margin-left: 4px; } .ml5 { margin-left: 5px; }

/* workspace */
.work { flex: 1; display: flex; min-height: 0; }
.view-col { width: 1000px; flex: none; display: flex; flex-direction: column; }
.tabs { height: 25px; flex: none; overflow: hidden; }
.tab { width: 118px; height: 25px; background: #4f9cb8; color: #fff; display: flex; align-items: center; font-size: 15px; white-space: nowrap; overflow: hidden; }
.tab-name { margin-left: -20px; flex: none; }
.tab-ic { width: 9px; height: 10px; margin-left: 6px; flex: none; border-radius: 1px; border: 2px solid #27647c; border-right-width: 3px; background: #fff; }
.tab-x { margin-left: 5px; color: #c9e0e8; font-size: 16px; font-weight: 700; }
.viewport { flex: 1; border-top: 3px solid #4f9cb8; background: linear-gradient(#2f3135, #1f2428); min-height: 0; }
.scene { display: block; width: 1000px; height: 822px; }
.lb { font-family: "Liberation Sans", sans-serif; font-size: 13px; }
.bl { fill: #2a52d4; } .rd { fill: #d62a2a; font-weight: 700; } .gr { fill: #8ea81c; } .rd2 { fill: #d8421c; }

.strip { width: 103px; flex: none; background: #fff; display: flex; flex-direction: column; align-items: center; padding-top: 11px; gap: 9px; }
.st { width: 26px; height: 24px; display: block; flex: none; }
.st-line { width: 96px; height: 1px; background: #dcdcdc; position: relative; margin: 0 0 2px 0; flex: none; }
.st-line.first { margin-top: -4px; }
.ct { position: absolute; right: 10px; top: 2px; border: 2px solid transparent; border-top: 3px solid #222; }
.st.last { margin: 0; }
.leftarrow { margin: auto auto 6px 10px; width: 0; height: 0; border: 4px solid transparent; border-right: 5px solid #222; border-left: 0; }

.nav { flex: 1; min-width: 0; border-left: 1px solid #999; background: #fff; padding-left: 9px; overflow: hidden; border-bottom: 1px solid #aaa; display: flex; flex-direction: column; }
.nav-head { height: 31px; display: flex; align-items: center; gap: 11px; padding-left: 4px; font-size: 15px; white-space: nowrap; flex: none; padding-top: 2px; }
.nav-head .box { width: 14px; height: 13px; border: 1.5px solid #222; display: block; flex: none; }
.tree { border-left: 1px solid #ccc; border-bottom: 2px solid #aaa; flex: none; white-space: nowrap; width: 200px; }
.tree-h { height: 26px; line-height: 26px; background: #ededed; padding-left: 7px; font-size: 15px; }
.tree-root { height: 24px; line-height: 24px; padding-left: 4px; font-size: 15px; color: #222; }
.tree-rows { position: relative; }
.tree-rows::before { content: ""; position: absolute; left: 10px; top: 12px; bottom: 12px; border-left: 1px dotted #777; }
.r { height: 24px; display: flex; align-items: center; padding-left: 22px; position: relative; }
.r:nth-child(even) { background: #f6f6f6; }
.r::before { content: ""; position: absolute; left: 11px; width: 10px; border-top: 1px dotted #888; }
.k { width: 13px; height: 13px; display: block; flex: none; }
.fold { width: 8px; height: 14px; border: 1px solid #a08a40; background: #fbeeb8; margin-left: 3px; display: block; flex: none; }
.fold.vio { width: 14px; margin-left: 0; background: #f6e39c; border-right: 5px solid #3a2f90; }
.exp { width: 10px; height: 10px; background: #fff; border: 1px solid #bbb; position: absolute; left: 5px; z-index: 1; }
.exp::after { content: ""; display: block; margin: 3px 1px 0; height: 1px; background: #222; }
.warn { color: #eac21c; font-weight: 700; font-size: 17px; margin: 0 1px 0 3px; line-height: 1; }
.tree-sb { height: 30px; background: #f0f0f0; position: relative; }
.tree-sb i { display: block; height: 5px; width: 70px; background: #8f8f8f; margin: 16px 0 0 22px; position: absolute; top: 0; }
.nav-tab { height: 28px; line-height: 26px; padding-left: 6px; font-size: 18px; color: #2a7f9a; border-bottom: 2px solid #ddd; white-space: nowrap; flex: none; }
.tree + .nav-tab { margin-top: 3px; height: 29px; }

.status { height: 24px; flex: none; line-height: 21px; background: #fafafa; border-top: 1px solid #aaa; text-align: center; font-weight: 700; width: 1500px; font-size: 15px; color: #333; }

/* modal */
.modal { position: absolute; left: 623px; top: 450px; width: 322px; height: 132px; background: #efefef; border: 1px solid #777; border-top: 0; }
.modal-t { height: 33px; background: #519fbb; color: #f2f8fb; display: flex; align-items: center; padding-left: 9px; font-size: 15px; margin: 0 -1px; }
.modal-t span { flex: 1; }
.mc { width: 14px; height: 14px; margin-right: 16px; flex: none; }
.mc:last-child { margin-right: 11px; }
.modal-b { display: flex; padding: 10px 0 0 17px; height: 60px; }
.hg { width: 32px; height: 41px; flex: none; }
.modal-txt { margin: -1px 0 0 23px; line-height: 20px; font-size: 14px; color: #222; }
.q { font-family: "Liberation Sans", sans-serif; padding: 0 2.5px; }
.modal-f { display: flex; justify-content: center; padding-right: 12px; }
.stop { width: 84px; height: 28px; background: #6fb0c9; border: 0; color: #fff; font: inherit; padding: 0; }
.stop u { text-decoration: underline; }

/* operation dialog */
.dlg { position: absolute; left: 1156px; top: 4px; width: 364px; height: 1023px; background: #efefef; overflow: hidden; border-left: 1px solid #d0d0d0; }
.dlg-t { height: 27px; margin-left: -1px; background: #4f9cb8; color: #eaf5f9; display: flex; align-items: center; font-size: 18px; letter-spacing: .38px; padding-left: 9px; white-space: nowrap; position: relative; }
.gear { width: 15px; height: 15px; margin-right: 8px; flex: none; }
.dlg-x { position: absolute; right: -5px; top: 0; line-height: 27px; font-size: 20px; color: #fff; }
.dlg-b { padding: 5px 0 0 5px; display: flex; flex-direction: column; gap: 3px; }
.sec { background: #fff; border-bottom: 1px solid #cfcfcf; flex: none; }
.sec h2 { margin: 0; height: 28px; line-height: 25px; font-size: 18px; font-weight: 400; color: #2b7189; padding: 0 0 2px 7px; display: flex; justify-content: space-between; align-items: center; }
.s-a { height: 210px; } .s-a .row:first-of-type { margin-top: 5px; }
.s-b { height: 162px; } .s-b .row { margin-top: 6px; }
.closed { height: 28px; }
.s-c { height: 329px; } .s-c .row:first-of-type { margin-top: 6px; }
.s-d { height: 75px; }
.chev { width: 10px; height: 10px; border-left: 3px solid #0f6480; border-bottom: 3px solid #0f6480; transform: rotate(-45deg); margin: -2px 0 0 0; display: block; flex: none; }
.chev.up { transform: rotate(135deg); margin-top: 6px; }
.chev.sm { width: 8px; height: 8px; border-width: 2.4px; margin: -3px 7px 0 0; }
.row { display: flex; align-items: flex-start; padding-left: 9px; margin-right: -1px; }
.row label { margin-right: auto; font-size: 15px; line-height: 30px; color: #222; white-space: nowrap; }
.h34 { height: 34px; } .h30 { height: 30px; } .h29 { height: 29px; }
.h30 label { line-height: 27px; } .h29 label { line-height: 24px; }
.up2 label { line-height: 23px; }
.top label { line-height: 27px; }
.low label { line-height: 40px; }
.ib { width: 32px; height: 32px; border: 1px solid #a8a8a8; background: #fff; display: flex; align-items: center; justify-content: center; flex: none; margin-left: 1px; }
.ib.lt { border-color: #dcdcdc; }
.ib svg { width: 26px; height: 26px; display: block; }
.sel { height: 28px; border: 1px solid #b0b0b0; background: #fff; display: flex; align-items: center; justify-content: space-between; padding: 0 7px 0 4px; font-size: 15px; flex: none; overflow: hidden; color: #333; }
.sel span { overflow: hidden; white-space: nowrap; flex: 1; min-width: 0; margin-right: 6px; }
.lat { font-size: 16px; }
.w130 { width: 130px; margin-right: 3px; }
.w152 { width: 152px; height: 27px; }
.w71 { width: 71px; margin-left: 2px; height: 27px; }
.num { height: 26px; border: 1px solid #c4c4c4; background: #fff; font-family: "DejaVu Sans Mono", monospace; font-size: 16px; letter-spacing: -.63px; text-align: right; padding-right: 4px; line-height: 24px; color: #555; white-space: nowrap; flex: none; }
.w90 { width: 90px; }
.nomar { padding-right: 3px; }
.sub { height: 26px; margin: 0 0 3px 9px; background: #eee; border: 1px solid #e0e0e0; line-height: 24px; padding-left: 8px; color: #2b7189; font-size: 14px; display: flex; justify-content: space-between; align-items: center; }
.sub:nth-of-type(1) { margin-top: 2px; }
.ops { display: flex; justify-content: center; padding: 6px 0 0 8px; margin-left: -1px; }
.ops .ib { margin: 0 1px; }
.dlg-f { display: flex; justify-content: flex-end; gap: 6px; margin-top: 11px; padding-right: 1px; }
.ok, .cancel { height: 28px; border: 0; font: inherit; font-size: 15px; padding: 0; }
.ok { width: 60px; background: #6fb0c9; color: #fff; }
.cancel { width: 58px; background: #dedede; border: 1px solid #bbb; color: #222; }
.wm { position: absolute; right: 2px; bottom: 3px; font-family: "Liberation Mono", "Noto Sans CJK SC", monospace; font-size: 14px; letter-spacing: 1.5px; color: #7b7b7b; line-height: 16px; white-space: nowrap; }
```
